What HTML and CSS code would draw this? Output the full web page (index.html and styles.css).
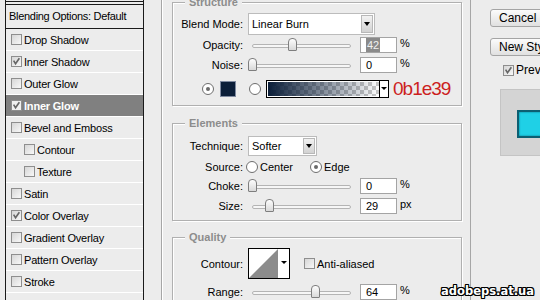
FILE: index.html
```html
<!DOCTYPE html>
<html lang="en">
<head>
    <meta charset="UTF-8">
    <title>Layer Style</title>
    <link rel="stylesheet" href="styles.css">
</head>
<body>
    <div class="page">
        <div class="styles">
            <div class="cap"></div>
            <div class="styles-head">Blending Options: Default</div>
            <div class="style-row"><span class="box"></span>Drop Shadow</div>
            <div class="style-row"><span class="box"><svg viewBox="0 0 11 11"><path d="M2 4.5 L4.3 8.2 L9 1.5" /></svg></span>Inner Shadow</div>
            <div class="style-row"><span class="box"></span>Outer Glow</div>
            <div class="style-row selected"><span class="box"><svg viewBox="0 0 11 11"><path d="M2 4.5 L4.3 8.2 L9 1.5" /></svg></span>Inner Glow</div>
            <div class="style-row"><span class="box"></span>Bevel and Emboss</div>
            <div class="style-row sub"><span class="box"></span>Contour</div>
            <div class="style-row sub"><span class="box"></span>Texture</div>
            <div class="style-row"><span class="box"></span>Satin</div>
            <div class="style-row"><span class="box"><svg viewBox="0 0 11 11"><path d="M2 4.5 L4.3 8.2 L9 1.5" /></svg></span>Color Overlay</div>
            <div class="style-row"><span class="box"></span>Gradient Overlay</div>
            <div class="style-row"><span class="box"></span>Pattern Overlay</div>
            <div class="style-row"><span class="box"></span>Stroke</div>
        </div>

        <div class="gutter"></div>

        <div class="main">
            <div class="group structure">
                <span class="group-title">Structure</span>
                <div class="row blend-row">
                    <span class="lbl">Blend Mode:</span>
                    <div class="select blend"><span class="select-text">Linear Burn</span><span class="drop"></span></div>
                </div>
                <div class="row num-row opacity-row">
                    <span class="lbl">Opacity:</span>
                    <div class="slider"><span class="thumb" style="left: 40px"></span></div>
                    <div class="num"><span class="hl">42</span></div>
                    <span class="unit">%</span>
                </div>
                <div class="row num-row noise-row">
                    <span class="lbl">Noise:</span>
                    <div class="slider"><span class="thumb" style="left: 0px"></span></div>
                    <div class="num">0</div>
                    <span class="unit">%</span>
                </div>
                <div class="row pick-row">
                    <span class="radio on"></span>
                    <span class="swatch"></span>
                    <span class="radio"></span>
                    <div class="gradient"><span class="gradient-fill"></span><span class="gradient-drop"></span></div>
                    <span class="hex">0b1e39</span>
                </div>
            </div>

            <div class="group elements">
                <span class="group-title">Elements</span>
                <div class="row tech-row">
                    <span class="lbl">Technique:</span>
                    <div class="select tech"><span class="select-text">Softer</span><span class="drop"></span></div>
                </div>
                <div class="row source-row">
                    <span class="lbl">Source:</span>
                    <span class="radio"></span><span class="radio-text">Center</span>
                    <span class="radio on edge"></span><span class="radio-text">Edge</span>
                </div>
                <div class="row num-row choke-row">
                    <span class="lbl">Choke:</span>
                    <div class="slider"><span class="thumb" style="left: 0px"></span></div>
                    <div class="num">0</div>
                    <span class="unit">%</span>
                </div>
                <div class="row num-row size-row">
                    <span class="lbl">Size:</span>
                    <div class="slider"><span class="thumb" style="left: 17px"></span></div>
                    <div class="num">29</div>
                    <span class="unit">px</span>
                </div>
            </div>

            <div class="group quality">
                <span class="group-title">Quality</span>
                <div class="row contour-row">
                    <span class="lbl">Contour:</span>
                    <svg class="contour" width="42" height="31" viewBox="0 0 42 31">
                        <rect x="0.5" y="0.5" width="41" height="30" fill="#fff" stroke="#000" />
                        <polygon points="1,30 30,1 30,30" fill="#8c8c8c" />
                        <polygon points="33,13 39,13 36,16" fill="#000" />
                    </svg>
                    <span class="box anti"></span><span class="anti-text">Anti-aliased</span>
                </div>
                <div class="row num-row range-row">
                    <span class="lbl">Range:</span>
                    <div class="slider"><span class="thumb" style="left: 63px"></span></div>
                    <div class="num">64</div>
                    <span class="unit">%</span>
                </div>
            </div>
        </div>

        <div class="side">
            <div class="btn cancel">Cancel</div>
            <div class="btn new-style">New Style...</div>
            <div class="preview-check"><span class="box"><svg viewBox="0 0 11 11"><path d="M2 4.5 L4.3 8.2 L9 1.5" /></svg></span>Preview</div>
            <div class="preview">
                <div class="preview-swatch"></div>
            </div>
        </div>
    </div>

    <div class="watermark">adobeps.at.ua</div>
</body>
</html>
```

FILE: styles.css
```css
body {
    margin: 0;
    background-color: #ececec;
    font-family: "Liberation Sans", Arial, sans-serif;
    font-size: 11px;
    color: #000;
    overflow: hidden;
}

.page {
    display: flex;
    width: 540px;
    height: 300px;
    overflow: hidden;
}

/* styles list on the left */
.styles {
    flex: none;
    width: 139px;
    margin-left: 5px;
    box-sizing: border-box;
    border-left: 1px solid #1a1a1a;
    border-right: 1px solid #1a1a1a;
}

.cap {
    height: 2px;
    margin-top: 1px;
    border-top: 1px solid #1a1a1a;
    border-bottom: 1px solid #1a1a1a;
}

.styles-head {
    height: 23px;
    line-height: 22px;
    padding-left: 3px;
    border-bottom: 1px solid #1a1a1a;
    letter-spacing: -0.3px;
}

.style-row {
    display: flex;
    align-items: center;
    gap: 2px;
    height: 21px;
    padding-left: 5px;
    border-bottom: 1px solid #fff;
    letter-spacing: -0.2px;
}

.style-row.sub {
    padding-left: 18px;
}

.style-row.selected {
    background-color: #808080;
    color: #fff;
    font-weight: bold;
}

.box {
    flex: none;
    width: 11px;
    height: 11px;
    box-sizing: border-box;
    border: 1px solid #8e8e8e;
    background: linear-gradient(135deg, #d6d6d6, #f8f8f8);
}

.box svg {
    display: block;
    width: 9px;
    height: 9px;
}

.box path {
    fill: none;
    stroke: #666;
    stroke-width: 2;
}

.selected .box {
    background: #f0f0f0;
}

.gutter {
    flex: none;
    width: 17px;
}

/* main dialog area */
.main {
    flex: none;
    width: 310px;
    box-sizing: border-box;
    border-left: 1px solid #a6a6a6;
    border-right: 1px solid #a6a6a6;
    box-shadow: inset 1px 0 0 #fff;
}

.group {
    position: relative;
    width: 290px;
    margin-left: 10px;
    box-sizing: border-box;
    border: 1px solid #b0b0b0;
    box-shadow: 1px 1px 0 #fff, inset 1px 1px 0 #fff;
}

.group-title {
    position: absolute;
    top: -7px;
    left: 12px;
    padding: 0 4px;
    line-height: 13px;
    background-color: #ececec;
    color: #8c8c8c;
    font-weight: bold;
}

.structure {
    margin-top: 2px;
    height: 104px;
}

.elements {
    margin-top: 17px;
    height: 98px;
}

.quality {
    margin-top: 16px;
    height: 80px;
}

.row {
    display: flex;
    align-items: center;
}

.lbl {
    flex: none;
    width: 70px;
    margin-right: 5px;
    text-align: right;
}

.select {
    display: flex;
    justify-content: space-between;
    box-sizing: border-box;
    border: 1px solid #bcbcbc;
    background-color: #fff;
}

.select-text {
    padding-left: 3px;
    align-self: center;
}

.drop {
    flex: none;
    position: relative;
    width: 12px;
    margin: 1px;
    box-sizing: border-box;
    border: 1px solid #b8b8b8;
    background: linear-gradient(#f2f2f2, #d2d2d2);
}

.drop::after {
    content: "";
    position: absolute;
    left: 2px;
    top: 50%;
    margin-top: -2px;
    border-left: 3px solid transparent;
    border-right: 3px solid transparent;
    border-top: 4px solid #000;
}

.blend-row {
    margin-top: 10px;
    height: 22px;
}

.blend {
    width: 127px;
    height: 22px;
}

.num-row {
    height: 16px;
}

.opacity-row {
    margin-top: 2px;
}

.noise-row {
    margin-top: 4px;
}

.slider {
    flex: none;
    position: relative;
    width: 103px;
    height: 16px;
}

.slider::before {
    content: "";
    position: absolute;
    left: 4px;
    right: 0;
    top: 7px;
    height: 2px;
    border: 1px solid #b4b4b4;
    border-radius: 2px;
    background-color: #f6f6f6;
}

.thumb {
    position: absolute;
    top: 1px;
    width: 9px;
    height: 13px;
    box-sizing: border-box;
    border: 1px solid #7e7e7e;
    border-radius: 4px 4px 1px 1px;
    background: linear-gradient(#fdfdfd, #d9d9d9);
}

.num {
    flex: none;
    width: 37px;
    height: 16px;
    margin-left: 9px;
    padding-left: 5px;
    box-sizing: border-box;
    border: 1px solid #a4a4a4;
    background-color: #fff;
    line-height: 14px;
}

.hl {
    display: inline-block;
    padding: 0 1px;
    background-color: #8a8a8a;
    color: #f0f0f0;
}

.unit {
    margin-left: 3px;
    align-self: flex-start;
    line-height: 13px;
}

.radio {
    flex: none;
    position: relative;
    width: 12px;
    height: 12px;
    box-sizing: border-box;
    border: 1px solid #6e6e6e;
    border-radius: 50%;
    background-color: #fff;
}

.radio.on::after {
    content: "";
    position: absolute;
    left: 3px;
    top: 3px;
    width: 4px;
    height: 4px;
    border-radius: 50%;
    background-color: #6a6a6a;
}

.pick-row {
    margin-top: 7px;
    height: 18px;
    padding-left: 29px;
}

.swatch {
    flex: none;
    width: 16px;
    height: 16px;
    margin: 0 13px 0 6px;
    box-sizing: border-box;
    border: 1px solid #7f8aa0;
    background-color: #0b1e39;
}

.gradient {
    flex: none;
    display: flex;
    width: 123px;
    height: 18px;
    margin-left: 5px;
    box-sizing: border-box;
    border: 1px solid #000;
    box-shadow: inset 0 0 0 1px #fff;
}

.gradient-fill {
    flex: 1;
    margin: 1px 0 1px 1px;
    background:
        linear-gradient(to right, #0b1e39, rgba(11, 30, 57, 0)),
        repeating-conic-gradient(#c8c8c8 0 25%, #fff 0 50%) 0 0 / 8px 8px;
}

.gradient-drop {
    flex: none;
    position: relative;
    width: 8px;
    border-left: 1px solid #000;
    background-color: #fff;
}

.gradient-drop::after {
    content: "";
    position: absolute;
    left: 1px;
    top: 6px;
    border-left: 3px solid transparent;
    border-right: 3px solid transparent;
    border-top: 3px solid #000;
}

.hex {
    margin-left: 4px;
    font-size: 19px;
    letter-spacing: -1px;
    color: #cc1f1f;
}

.tech-row {
    margin-top: 12px;
    height: 20px;
}

.tech {
    width: 69px;
    height: 20px;
}

.source-row {
    margin-top: 4px;
    height: 13px;
}

.source-row .lbl {
    margin-right: 3px;
}

.radio-text {
    margin-left: 2px;
}

.radio.edge {
    margin-left: 17px;
}

.choke-row {
    margin-top: 5px;
}

.size-row {
    margin-top: 4px;
}

.contour-row {
    margin-top: 10px;
    height: 31px;
}

.contour {
    flex: none;
    display: block;
}

.box.anti {
    margin-left: 14px;
}

.anti-text {
    margin-left: 2px;
}

.range-row {
    margin-top: 5px;
}

/* buttons and preview on the right */
.side {
    flex: none;
    width: 90px;
    padding-left: 19px;
}

.btn {
    width: 80px;
    height: 18px;
    padding-left: 8px;
    box-sizing: border-box;
    border: 1px solid #a4a4a4;
    border-radius: 3px;
    background: linear-gradient(#fbfbfb, #e0e0e0);
    line-height: 16px;
    font-size: 12px;
    white-space: nowrap;
}

.cancel {
    margin-top: 9px;
}

.new-style {
    margin-top: 11px;
}

.preview-check {
    display: flex;
    align-items: center;
    gap: 2px;
    margin: 7px 0 0 13px;
    height: 14px;
    font-size: 12px;
}

.preview {
    width: 60px;
    height: 67px;
    margin: 12px 0 0 10px;
    box-sizing: border-box;
    border: 1px solid #c4c4c4;
    background-color: #d4d4d4;
    padding: 20px 0 0 16px;
}

.preview-swatch {
    width: 40px;
    height: 28px;
    box-sizing: border-box;
    border: 2px solid #0c5f72;
    background-color: #1fd0e6;
    box-shadow: inset 0 0 2px #0b6d80;
}

.watermark {
    position: absolute;
    right: 6px;
    bottom: 2px;
    font-family: "DejaVu Sans", sans-serif;
    font-weight: bold;
    font-size: 11.5px;
    color: #fff;
    text-shadow: 1px 0 0 #000, -1px 0 0 #000, 0 1px 0 #000, 0 -1px 0 #000,
        1px 1px 0 #000, -1px -1px 0 #000, 1px -1px 0 #000, -1px 1px 0 #000;
}
```
